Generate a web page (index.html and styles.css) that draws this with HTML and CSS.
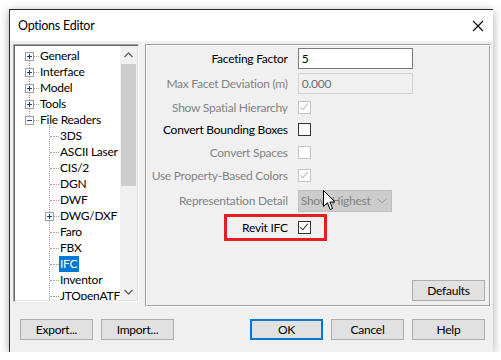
FILE: index.html
```html
<!DOCTYPE html>
<html lang="en">
<head>
    <meta charset="UTF-8">
    <meta name="viewport" content="width=device-width, initial-scale=1.0">
    <title>Options Editor</title>
    <link rel="stylesheet" href="styles.css">
</head>
<body>
    <div class="dialog">
        <div class="titlebar">
            <span class="title">Options Editor</span>
            <svg class="close" width="12" height="12" viewBox="0 0 12 12">
                <path d="M1 1 L11 11 M11 1 L1 11" stroke="#000" stroke-width="1.1" fill="none"/>
            </svg>
        </div>

        <div class="dialog-body">
            <div class="content">
                <div class="tree">
                    <div class="tree-list">
                        <div class="top-group">
                            <div class="node"><span class="box plus"></span><span class="dots"></span><span class="label">General</span></div>
                            <div class="node"><span class="box plus"></span><span class="dots"></span><span class="label">Interface</span></div>
                            <div class="node"><span class="box plus"></span><span class="dots"></span><span class="label">Model</span></div>
                            <div class="node"><span class="box plus"></span><span class="dots"></span><span class="label">Tools</span></div>
                            <div class="node"><span class="box minus"></span><span class="dots"></span><span class="label">File Readers</span></div>
                        </div>
                        <div class="children">
                            <div class="node child"><span class="stub"></span><span class="dots"></span><span class="label">3DS</span></div>
                            <div class="node child"><span class="stub"></span><span class="dots"></span><span class="label">ASCII Laser</span></div>
                            <div class="node child"><span class="stub"></span><span class="dots"></span><span class="label">CIS/2</span></div>
                            <div class="node child"><span class="stub"></span><span class="dots"></span><span class="label">DGN</span></div>
                            <div class="node child"><span class="stub"></span><span class="dots"></span><span class="label">DWF</span></div>
                            <div class="node child"><span class="box plus"></span><span class="dots"></span><span class="label">DWG/DXF</span></div>
                            <div class="node child"><span class="stub"></span><span class="dots"></span><span class="label">Faro</span></div>
                            <div class="node child"><span class="stub"></span><span class="dots"></span><span class="label">FBX</span></div>
                            <div class="node child"><span class="stub"></span><span class="dots"></span><span class="label selected">IFC</span></div>
                            <div class="node child"><span class="stub"></span><span class="dots"></span><span class="label">Inventor</span></div>
                            <div class="node child"><span class="stub"></span><span class="dots"></span><span class="label">JTOpenATF</span></div>
                        </div>
                    </div>
                    <div class="scrollbar">
                        <div class="arrow">
                            <svg width="9" height="6" viewBox="0 0 9 6"><path d="M0.5 5 L4.5 1 L8.5 5" stroke="#606060" stroke-width="1.3" fill="none"/></svg>
                        </div>
                        <div class="track"><div class="thumb"></div></div>
                        <div class="arrow">
                            <svg width="9" height="6" viewBox="0 0 9 6"><path d="M0.5 1 L4.5 5 L8.5 1" stroke="#606060" stroke-width="1.3" fill="none"/></svg>
                        </div>
                    </div>
                </div>

                <div class="panel">
                    <div class="row r1">
                        <span class="lbl">Faceting Factor</span>
                        <div class="field">5</div>
                    </div>
                    <div class="row r2">
                        <span class="lbl off">Max Facet Deviation (m)</span>
                        <div class="field off">0.000</div>
                    </div>
                    <div class="row r3">
                        <span class="lbl off">Show Spatial Hierarchy</span>
                        <span class="check off checked"></span>
                    </div>
                    <div class="row r4">
                        <span class="lbl">Convert Bounding Boxes</span>
                        <span class="check"></span>
                    </div>
                    <div class="row r5">
                        <span class="lbl off">Convert Spaces</span>
                        <span class="check off"></span>
                    </div>
                    <div class="row r6">
                        <span class="lbl off">Use Property-Based Colors</span>
                        <span class="check off checked"></span>
                    </div>
                    <div class="row r7">
                        <span class="lbl off">Representation Detail</span>
                        <div class="select">
                            <span>Show Highest</span>
                            <svg width="10" height="6" viewBox="0 0 10 6"><path d="M0.5 0.5 L5 5 L9.5 0.5" stroke="#9a9a9a" stroke-width="1" fill="none"/></svg>
                        </div>
                        <svg class="cursor" width="13" height="21" viewBox="0 0 13 21">
                            <path d="M0.5 0.5 L0.5 16.5 L4.5 12.8 L7.2 19.5 L9.6 18.5 L7 12 L12 12 Z" fill="#fff" stroke="#000" stroke-width="1" stroke-linejoin="round"/>
                        </svg>
                    </div>
                    <div class="row r8">
                        <div class="highlight">
                            <span class="hl-lbl">Revit IFC</span>
                            <span class="check checked"></span>
                        </div>
                    </div>
                    <div class="panel-foot">
                        <button class="btn">Defaults</button>
                    </div>
                </div>
            </div>

            <div class="footer">
                <div class="btn-group">
                    <button class="btn">Export...</button>
                    <button class="btn">Import...</button>
                </div>
                <div class="btn-group">
                    <button class="btn default">OK</button>
                    <button class="btn">Cancel</button>
                    <button class="btn">Help</button>
                </div>
            </div>
        </div>
    </div>
</body>
</html>
```

FILE: styles.css
```css
body {
    margin: 0;
    padding: 9px 0 0 9px;
    background: #fff;
    font-family: Lato, "Noto Sans", sans-serif;
    font-size: 12px;
    letter-spacing: -0.25px;
    color: #000;
}

.dialog {
    width: 483px;
    height: 342px;
    display: flex;
    flex-direction: column;
    border-top: 1px solid #2b2b2b;
    border-left: 1px solid #2b2b2b;
    background: #f0f0f0;
    box-shadow: 0 2px 9px rgba(0, 0, 0, 0.35);
}

.titlebar {
    height: 31px;
    flex-shrink: 0;
    background: #fff;
    display: flex;
    align-items: center;
    justify-content: space-between;
    padding: 0 9px 0 8px;
}

.title {
    font-size: 12.5px;
}

.close {
    margin-top: 1px;
}

.dialog-body {
    flex: 1;
    padding: 3px 2px 0 3px;
    display: flex;
    flex-direction: column;
}

.content {
    display: flex;
    gap: 6px;
    align-items: flex-start;
}

/* tree view */
.tree {
    width: 122px;
    height: 254px;
    display: flex;
    border: 1px solid;
    border-color: #a0a0a0 #fff #fff #a0a0a0;
    box-shadow: inset 1px 1px 0 #696969, inset -1px -1px 0 #e3e3e3;
    padding: 1px;
    background: #fff;
    overflow: hidden;
}

.tree-list {
    flex: 1;
    min-width: 0;
    padding-top: 2px;
    overflow: hidden;
}

.top-group,
.children {
    position: relative;
}

.top-group::before {
    content: "";
    position: absolute;
    left: 14px;
    top: 8px;
    bottom: 8px;
    border-left: 1px dotted #a0a0a0;
}

.children::before {
    content: "";
    position: absolute;
    left: 34px;
    top: -3px;
    bottom: -10px;
    border-left: 1px dotted #a0a0a0;
}

.node {
    height: 16px;
    display: flex;
    align-items: center;
    padding-left: 10px;
    white-space: nowrap;
}

.node.child {
    padding-left: 30px;
}

.node > span {
    flex-shrink: 0;
}

.box {
    position: relative;
    z-index: 1;
    width: 7px;
    height: 7px;
    border: 1px solid #a0a0a0;
    background: #fff;
}

.box::before,
.box::after {
    content: "";
    position: absolute;
    background: #1d3f93;
}

.box::before {
    left: 1px;
    top: 3px;
    width: 5px;
    height: 1px;
}

.box.plus::after {
    left: 3px;
    top: 1px;
    width: 1px;
    height: 5px;
}

.stub {
    width: 4px;
    margin-left: 5px;
    border-top: 1px dotted #a0a0a0;
}

.dots {
    width: 5px;
    border-top: 1px dotted #a0a0a0;
}

.label {
    padding: 0 2px 1px 1px;
    line-height: 15px;
}

.label.selected {
    background: #0078d7;
    color: #fff;
}

.scrollbar {
    width: 17px;
    flex-shrink: 0;
    display: flex;
    flex-direction: column;
    background: #f0f0f0;
}

.arrow {
    height: 17px;
    display: flex;
    align-items: center;
    justify-content: center;
}

.track {
    flex: 1;
    padding: 1px 1px 0 1px;
}

.thumb {
    height: 122px;
    background: #cdcdcd;
}

/* settings panel */
.panel {
    position: relative;
    width: 345px;
    height: 259px;
    border: 1px solid;
    border-color: #a0a0a0 #fff #fff #a0a0a0;
    box-shadow: inset 1px 1px 0 #fff, inset -1px -1px 0 #a0a0a0;
    padding-top: 2px;
    display: flex;
    flex-direction: column;
}

.row {
    display: flex;
    align-items: center;
    flex-shrink: 0;
}

.r1 { height: 23px; }
.r2 { height: 26px; }
.r3 { height: 22px; }
.r4 { height: 23px; }
.r5 { height: 23px; }
.r6 { height: 23px; }
.r7 { height: 27px; }
.r8 { height: 27px; }

.lbl {
    width: 142px;
    margin-right: 10px;
    text-align: right;
    white-space: nowrap;
}

.off {
    color: #838383;
}

.field {
    width: 110px;
    height: 19px;
    line-height: 19px;
    padding: 0 0 0 3px;
    border: 1px solid #7a7a7a;
    background: #fff;
}

.field.off {
    border-color: #d2d2d2;
    background: #f0f0f0;
    color: #6d6d6d;
}

.check {
    position: relative;
    width: 11px;
    height: 11px;
    border: 1px solid #333;
    background: #fff;
}

.check.off {
    border-color: #c4c4c4;
}

.check.checked::after {
    content: "";
    position: absolute;
    left: 3px;
    top: 0px;
    width: 3px;
    height: 7px;
    border: solid #333;
    border-width: 0 1px 1px 0;
    transform: rotate(40deg);
}

.check.off.checked::after {
    border-color: #bcbcbc;
}

.select {
    width: 86px;
    height: 20px;
    padding: 0 4px 0 2px;
    display: flex;
    align-items: center;
    justify-content: space-between;
    background: #cccccc;
    border: 1px solid #bfbfbf;
    color: #838383;
    white-space: nowrap;
}

.cursor {
    position: absolute;
    left: 177px;
    top: 145px;
}

.highlight {
    margin-left: 78px;
    height: 21px;
    display: flex;
    align-items: center;
    border: 3px solid #e81c24;
    padding-right: 13px;
}

.hl-lbl {
    width: 61px;
    margin-right: 10px;
    text-align: right;
}

.panel-foot {
    flex: 1;
    display: flex;
    justify-content: flex-end;
    align-items: flex-end;
    padding: 0 5px 5px 0;
}

/* buttons */
.btn {
    width: 73px;
    height: 21px;
    padding: 0;
    font-family: inherit;
    font-size: 12px;
    letter-spacing: -0.25px;
    color: #000;
    background: #e1e1e1;
    border: 1px solid #adadad;
}

.btn.default {
    border: 2px solid #0078d7;
}

.footer {
    margin-top: 12px;
    display: flex;
    justify-content: space-between;
    padding: 0 6px 0 7px;
}

.btn-group {
    display: flex;
    gap: 8px;
}
```
